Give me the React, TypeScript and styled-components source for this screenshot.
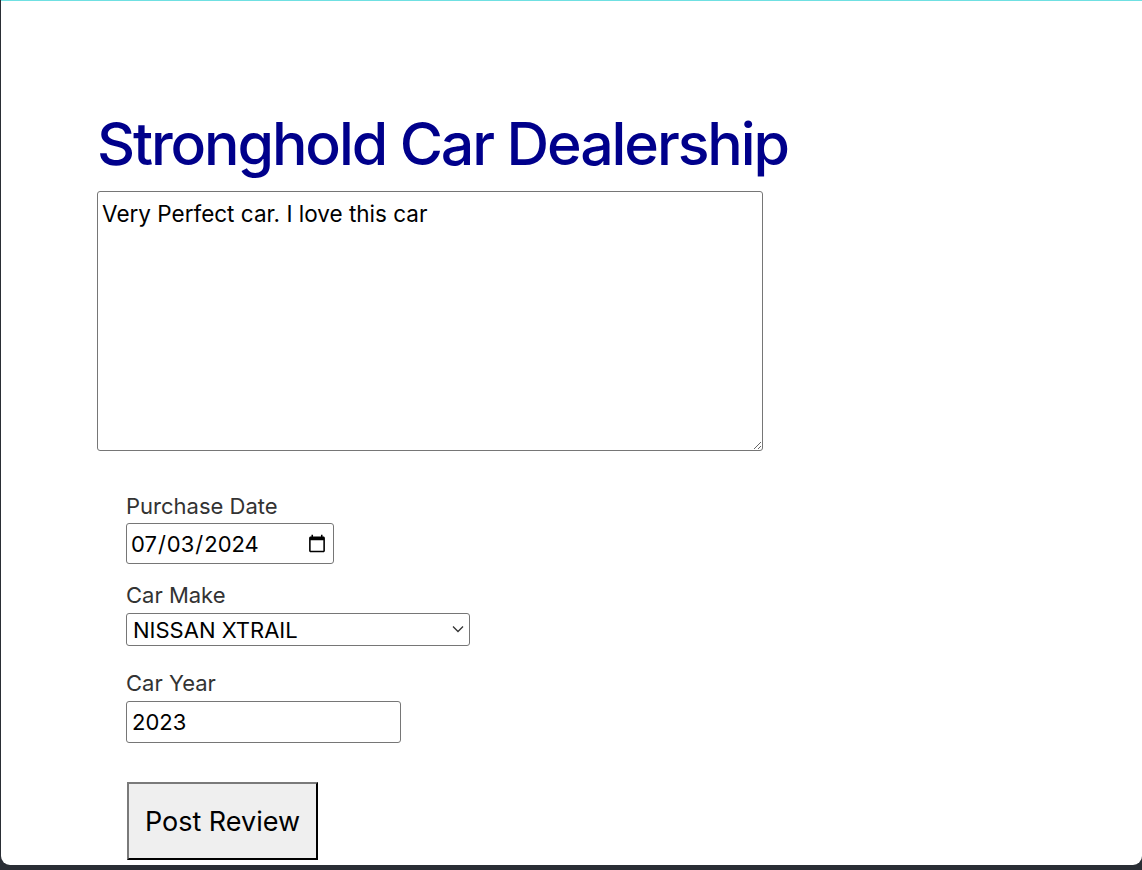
import React from "react";
import styled, { createGlobalStyle } from "styled-components";

const GlobalStyle = createGlobalStyle`
  html, body {
    margin: 0;
    padding: 0;
    background: #2a2e35;
  }
  body {
    font-family: "Inter", "Helvetica Neue", Arial, sans-serif;
  }
  * { box-sizing: border-box; }
`;

const Frame = styled.div`
  width: 1142px;
  height: 870px;
  background: #2a2e35;
  display: flex;
  flex-direction: column;
  overflow: hidden;
`;

const Viewport = styled.div`
  flex: 1;
  margin: 0 0 5px 1px;
  background: #ffffff;
  border-top: 1px solid #6fe0e2;
  border-radius: 0 0 9px 9px;
  overflow: hidden;
`;

const Page = styled.main`
  padding: 110px 0 0 96px;
  display: flex;
  flex-direction: column;
  align-items: flex-start;
`;

const Title = styled.h1`
  margin: 0 0 14px;
  font-size: 59px;
  line-height: 66px;
  font-weight: 500;
  color: #00008b;
  letter-spacing: -2.1px;
`;

const ReviewBox = styled.textarea`
  width: 666px;
  height: 260px;
  margin: 0;
  padding: 8px 4px 4px;
  border: 1px solid #767676;
  border-radius: 3px;
  font-family: inherit;
  font-size: 22.5px;
  line-height: 1.2;
  color: #000;
  resize: both;
`;

const Form = styled.form`
  display: flex;
  flex-direction: column;
  align-items: flex-start;
  padding-left: 29px;
  margin-top: 42px;
`;

const Field = styled.div<{ $top: number }>`
  display: flex;
  flex-direction: column;
  align-items: flex-start;
  margin-top: ${(p) => p.$top}px;
`;

const Label = styled.label<{ $gap: number }>`
  display: block;
  font-size: 22px;
  line-height: 27px;
  color: #333;
  margin-bottom: ${(p) => p.$gap}px;
`;

const DateInput = styled.input`
  width: 208px;
  height: 41px;
  margin: 0;
  padding: 0 6px 0 3px;
  border: 1px solid #767676;
  border-radius: 3px;
  font-family: inherit;
  font-size: 22px;
  color: #000;
  background: #fff;
  &::-webkit-calendar-picker-indicator {
    width: 20px;
    height: 20px;
    margin-left: 4px;
    padding: 0;
  }
`;

const SelectWrap = styled.div`
  position: relative;
  width: 344px;
  height: 33px;
`;

const Select = styled.select`
  appearance: none;
  -webkit-appearance: none;
  width: 100%;
  height: 100%;
  margin: 0;
  padding: 0 30px 0 6px;
  border: 1px solid #767676;
  border-radius: 3px;
  font-family: inherit;
  font-size: 22px;
  color: #000;
  background: #fff;
`;

const Chevron = styled.svg`
  position: absolute;
  right: 6px;
  top: 12px;
  width: 12px;
  height: 8px;
  pointer-events: none;
`;

const TextInput = styled.input`
  width: 275px;
  height: 42px;
  margin: 0;
  padding: 0 5px;
  border: 1px solid #767676;
  border-radius: 3px;
  font-family: inherit;
  font-size: 22px;
  color: #000;
  background: #fff;
`;

const SubmitButton = styled.button`
  margin: 39px 0 0 1px;
  width: 191px;
  height: 78px;
  border: 2px outset #767676;
  border-color: #7a7a7a #3d3d3d #3d3d3d #7a7a7a;
  border-radius: 0;
  background: #efefef;
  font-family: inherit;
  font-size: 27px;
  color: #000;
  padding: 0;
`;

export default function App() {
  return (
    <>
      <GlobalStyle />
      <Frame>
        <Viewport>
          <Page>
            <Title>Stronghold Car Dealership</Title>
            <ReviewBox defaultValue="Very Perfect car. I love this car" />
            <Form onSubmit={(e) => e.preventDefault()}>
              <Field $top={0}>
                <Label $gap={3} htmlFor="pdate">Purchase Date</Label>
                <DateInput id="pdate" type="date" defaultValue="2024-07-03" />
              </Field>
              <Field $top={18}>
                <Label $gap={4} htmlFor="make">Car Make</Label>
                <SelectWrap>
                  <Select id="make" defaultValue="NISSAN XTRAIL">
                    <option value="NISSAN XTRAIL">NISSAN XTRAIL</option>
                    <option value="TOYOTA COROLLA">TOYOTA COROLLA</option>
                    <option value="HONDA CIVIC">HONDA CIVIC</option>
                  </Select>
                  <Chevron viewBox="0 0 12 8">
                    <path d="M1 1.5 L6 6.5 L11 1.5" fill="none" stroke="#333" strokeWidth="1.3" />
                  </Chevron>
                </SelectWrap>
              </Field>
              <Field $top={24}>
                <Label $gap={4} htmlFor="year">Car Year</Label>
                <TextInput id="year" type="text" defaultValue="2023" />
              </Field>
              <SubmitButton type="submit">Post Review</SubmitButton>
            </Form>
          </Page>
        </Viewport>
      </Frame>
    </>
  );
}
